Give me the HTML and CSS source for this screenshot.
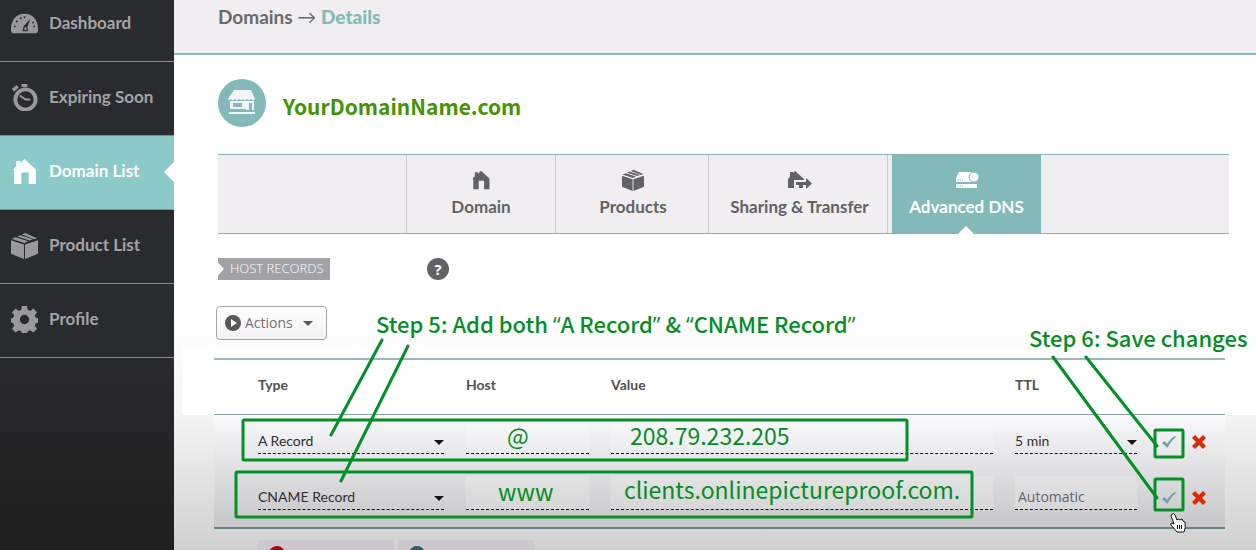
FILE: index.html
```html
<!DOCTYPE html>
<html lang="en">
<head>
<meta charset="utf-8">
<title>Domain Details</title>
<link rel="stylesheet" href="styles.css">
</head>
<body>
<svg class="defs" aria-hidden="true">
  <symbol id="house" viewBox="0 0 24 26"><path d="M1 11 4 8V3h4v2l4-4 11 10v14h-7V14H9v11H2V12z"/></symbol>
  <symbol id="box" viewBox="0 0 26 26"><path d="M0 8l12.500 4v14L0 21zM13.500 12L26 8v13l-12.500 5zM.5 6.500L4.500 5l12 4-3.500 1.500zM6 4.300l3-1.200 12 4-3 1.200zM10.500 2.500L13.500 1 25 6l-2.500 1z"/></symbol>
  <symbol id="gear" viewBox="0 0 26 26"><path fill-rule="evenodd" d="M10.500 0h5l.6 3.700 2.400 1 3-2.200 3.600 3.600-2.200 3 1 2.300 3.100.6v4l-3.100.6-1 2.400 2.200 3-3.600 3.500-3-2.200-2.400 1-.6 3.700h-5l-.6-3.700-2.400-1-3 2.200L.9 22l2.200-3-1-2.400-2.100-.6v-4l2.100-.6 1-2.300-2.200-3 3.600-3.600 3 2.200 2.400-1zM13 8.500a4.500 4.500 0 100 9 4.500 4.500 0 000-9z"/></symbol>
  <symbol id="tick" viewBox="0 0 14 12"><path d="M0 7l3-2 2 3q4-6 8-8l1 1Q8 6 5.500 12z"/></symbol>
  <symbol id="cross" viewBox="0 0 14 14"><path d="M0 3l3-3 4 4 4-4 3 3-4 4 4 4-3 3-4-4-4 4-3-3 4-4z"/></symbol>
</svg>

<div class="app">
  <aside class="sidebar">
    <nav aria-label="Account">
      <a class="side-link" href="#"><svg class="side-icon" viewBox="0 0 28 28"><path d="M0 20C0 10 6 4 14 4s14 6 14 16q0 4-2 4H2q-2 0-2-4z"/><g class="dial"><circle cx="4" cy="17" r="1"/><circle cx="6" cy="12" r="1"/><circle cx="10" cy="8.500" r="1"/><circle cx="14" cy="7.500" r="1"/><circle cx="23" cy="13" r="1"/><circle cx="24" cy="17" r="1"/><path d="M20 9l-3 9 .5 4H12l1-5z"/></g><path d="M14 18h2v3h-2z"/></svg><span>Dashboard</span></a>
      <a class="side-link" href="#"><svg class="side-icon" viewBox="0 0 28 28"><circle cx="15" cy="16" r="10.500" class="ring"/><path d="M11 0h6v3h-6zM1 5l5-4 2 3-5 4z"/><path d="M9 12l6 4h5" class="hand"/></svg><span>Expiring Soon</span></a>
      <a class="side-link active" href="#" aria-current="page"><svg class="side-icon"><use href="#house"/></svg><span>Domain List</span></a>
      <a class="side-link" href="#"><svg class="side-icon"><use href="#box"/></svg><span>Product List</span></a>
      <a class="side-link" href="#"><svg class="side-icon"><use href="#gear"/></svg><span>Profile</span></a>
    </nav>
  </aside>

  <main class="main">
    <header class="crumbs"><a href="#">Domains</a> <span>→</span> <strong>Details</strong></header>

    <div class="content">
      <div class="domain">
        <svg class="badge" viewBox="0 0 48 48"><circle cx="24" cy="24" r="24"/><path class="white" d="M16 11h17l4 9-2 1.500-2-1.500-2 1.500-2-1.500-2 1.500-2-1.500-2 1.500-2-1.500-2 1.500-2-1.500-2 1.500-2-1.500-2 1.500-1-1.500zM11 33h26v2H11z"/><path class="white" fill-rule="evenodd" d="M12 22h24v9h-2v-7h-3v7h-3v-1H12zM15 24v4h9v-4z"/></svg>
        <h1>YourDomainName.com</h1>
      </div>

      <nav class="tabs" aria-label="Domain sections">
        <a class="tab" href="#"><svg class="tab-icon"><use href="#house"/></svg>Domain</a>
        <a class="tab products" href="#"><svg class="tab-icon big"><use href="#box"/></svg>Products</a>
        <a class="tab sharing" href="#"><svg class="tab-icon wide" viewBox="0 0 24 18"><path d="M0 8l2-2V1h3v1l2-2 9 8v1H6v8H0z"/><path d="M8 11h10V7l6 5.500-6 5.500v-4h-3v3h-4v-3H8z"/></svg>Sharing &amp; Transfer</a>
        <a class="tab current" href="#" aria-current="page"><svg class="tab-icon wide" viewBox="0 0 24 18"><path d="M4 1h12l4 6H1zM1 7h20v4H1zM1 13h21v4H1z"/><circle cx="19" cy="6" r="5" class="cog"/><path class="leds" d="M3 9h6M3 15h6"/></svg>Advanced DNS</a>
      </nav>

      <div class="section-head">
        <h2>HOST RECORDS</h2>
        <button class="help" type="button" aria-label="Help">?</button>
      </div>

      <button class="actions" type="button"><svg class="play" viewBox="0 0 16 16"><circle cx="8" cy="8" r="8"/><path d="M6 4l6 4-6 4z"/></svg>Actions<i class="caret"></i></button>
    </div>

    <div class="records">
      <table>
        <colgroup><col class="c-type"><col class="c-host"><col><col class="c-ttl"><col class="c-act"></colgroup>
        <thead><tr><th>Type</th><th>Host</th><th>Value</th><th>TTL</th><th></th></tr></thead>
        <tbody>
          <tr>
            <td><div class="pick"><select aria-label="Type"><option>A Record</option></select><i class="caret"></i></div></td>
            <td><input class="note host-at" aria-label="Host" value="@"></td>
            <td><input class="note inset" aria-label="Value" value="208.79.232.205"></td>
            <td class="ttl"><div class="pick"><select aria-label="TTL"><option>5 min</option></select><i class="caret"></i></div></td>
            <td><div class="row-actions"><button type="button" aria-label="Save"><svg class="tick"><use href="#tick"/></svg></button><button type="button" aria-label="Cancel"><svg class="cross"><use href="#cross"/></svg></button></div></td>
          </tr>
          <tr>
            <td><div class="pick"><select aria-label="Type"><option>CNAME Record</option></select><i class="caret"></i></div></td>
            <td><input class="note host-www" aria-label="Host" value="www"></td>
            <td><input class="note raised" aria-label="Value" value="clients.onlinepictureproof.com."></td>
            <td class="ttl"><input class="auto" aria-label="TTL" value="Automatic"></td>
            <td><div class="row-actions"><button type="button" aria-label="Save"><svg class="tick"><use href="#tick"/></svg></button><button type="button" aria-label="Cancel"><svg class="cross"><use href="#cross"/></svg></button></div></td>
          </tr>
        </tbody>
      </table>
      <div class="footer">
        <button type="button" aria-label="Add record"><i class="dot red"></i></button>
        <button type="button" aria-label="Save all"><i class="dot teal"></i></button>
      </div>
    </div>
  </main>

  <svg class="marks" aria-hidden="true">
    <rect x="243" y="420" width="664" height="40" rx="1"/>
    <rect x="236" y="472" width="736" height="45" rx="1"/>
    <rect x="1155" y="430" width="28" height="27" rx="1"/>
    <rect x="1155" y="479" width="28" height="31" rx="1"/>
    <path d="M382 340 331 435M408 346 341 481M1053 357l104 141M1086 357l71 89"/>
  </svg>
  <p class="step five">Step 5: Add both <q>A Record</q> &amp; <q>CNAME Record</q></p>
  <p class="step six">Step 6: Save changes</p>
  <svg class="pointer" viewBox="0 0 17 20" aria-hidden="true"><path d="M3 1q2-1 3 1l2 5 1-1 2 1 2-1 1 2 2 1q1 6-1 10H8L2 12q-1-2 1-2l2 1L2 3z"/><path d="M8.500 12v4M10.500 12v4M12.500 12v4"/></svg>
</div>
</body>
</html>
```

FILE: styles.css
```css
* { box-sizing: border-box; }
body { margin: 0; font-family: Lato, "Open Sans", sans-serif; color: #58585a; background: #fff; }
h1, h2, p { margin: 0; }
a { color: inherit; text-decoration: none; }
button, input, select { font-family: inherit; color: inherit; border: 0; padding: 0; margin: 0; background: none; border-radius: 0; }
.defs { position: absolute; width: 0; height: 0; }
.app { position: relative; display: flex; height: 100vh; overflow: hidden; }

.sidebar { flex: 0 0 174px; background: linear-gradient(#2a2b2f, #2a2b2f 340px, #201f1f); }
.sidebar nav { margin-top: -12px; }
.side-link { position: relative; display: flex; align-items: center; gap: 11px; height: 74px; padding-left: 11px; border-bottom: 1px solid #87898c; color: #a3a3a6; font-size: 17px; font-weight: 700; line-height: 20px; }
.side-link span { padding-bottom: 3px; }
.side-icon { width: 27px; height: 27px; margin-bottom: 2px; fill: #99999c; }
.dial { fill: #2a2b2f; }
.ring { fill: none; stroke: #99999c; stroke-width: 4; }
.hand { fill: none; stroke: #99999c; stroke-width: 2; }
.active { background: #8ccaca; color: #fff; }
.active .side-icon { fill: #fff; }
.active::after { content: ""; position: absolute; right: 0; top: 26px; border: 10px solid transparent; border-right-color: #fff; border-left: 0; }

.main { flex: 1; min-width: 0; background: linear-gradient(#fff, #fff 310px, #f4f4f4 415px, #d0d0d0 550px); }
.crumbs { height: 55px; padding: 5px 44px; background: #f0eef1; border-bottom: 2px solid #87b4b5; font-size: 19px; line-height: 24px; font-weight: 700; color: #69696b; }
.crumbs span { font-weight: 400; }
.crumbs strong { color: #82b9b9; }
.content { padding: 24px 27px 0 44px; }
.domain { display: flex; align-items: center; gap: 17px; height: 48px; }
.badge { width: 48px; height: 48px; fill: #83b9b9; }
.white { fill: #f3f6f6; }
h1 { padding-top: 6px; font: 700 21px/28px "Noto Sans CJK SC", "Open Sans", sans-serif; color: #449301; }

.tabs { display: flex; height: 80px; margin-top: 27px; padding-left: 188px; background: #f0eef1; border: solid #84b3b2; border-width: 1px 0; }
.tab { position: relative; display: flex; flex-direction: column; align-items: center; gap: 6px; width: 149px; padding-top: 15px; border-left: 1px solid #cbcbce; color: #626264; font-size: 17px; line-height: 22px; font-weight: 700; }
.tab-icon { width: 20px; height: 20px; fill: #626264; }
.big { width: 22px; height: 22px; margin: -1px 0; }
.wide { width: 24px; }
.products { width: 153px; padding-left: 2px; }
.sharing { width: 180px; padding-left: 3px; border-right: 1px solid #cbcbce; }
.current { margin-left: 4px; border: 0; background: #83b9b9; color: #fff; }
.current .tab-icon { fill: #fff; }
.cog { stroke: #83b9b9; }
.leds { stroke: #83b9b9; stroke-dasharray: 1 1; }
.current::after { content: ""; position: absolute; bottom: -1px; left: 66px; border: 8px solid transparent; border-bottom-color: #fff; border-top: 0; }

.section-head { display: flex; align-items: center; margin-top: 24px; }
h2 { width: 112px; height: 22px; padding-left: 12px; background: #a1a1a7; clip-path: polygon(0 0, 100% 0, 100% 100%, 0 100%, 0 80%, 6px 50%, 0 20%); color: #fff; font: 300 13px/21px "Open Sans", sans-serif; white-space: nowrap; }
.help { width: 22px; height: 22px; margin-left: 97px; border-radius: 50%; background: #626264; color: #fff; font: 700 15px/22px "Open Sans", sans-serif; }
.actions { display: flex; align-items: center; width: 111px; height: 34px; margin: 26px 0 0 -2px; padding-left: 8px; border: 1px solid #a6a6a8; border-radius: 4px; background: linear-gradient(#fff, #f2f1f3); font: 400 14px/20px "Open Sans", sans-serif; color: #717173; }
.play { width: 16px; height: 16px; margin-right: 4px; fill: #58585a; }
.play path { fill: #fff; }
.caret { display: block; border: 5px solid transparent; border-top-color: #151515; border-bottom: 0; }
.actions .caret { margin-left: 10px; border-top-color: #58585a; }

.records { margin: 5px 0 0 8px; padding: 13px 31px 0 32px; background: linear-gradient(#fff 0, #fff 70px, transparent 70px); }
table { width: 100%; table-layout: fixed; border-collapse: separate; border-spacing: 0; border-top: 2px solid #9ab9bc; border-bottom: 2px solid #678587; }
.c-type { width: 252px; }
.c-host { width: 145px; }
.c-ttl { width: 139px; }
.c-act { width: 71px; }
th { height: 55px; padding: 0 0 6px; border-bottom: 1px solid #8ca3a6; text-align: left; font-size: 14px; font-weight: 700; color: #505052; }
th:first-child, td:first-child { padding-left: 44px; }
tbody { background: linear-gradient(#faf9fc, #dfdee0 50%, #c7c6c8); }
td { height: 56px; padding: 5px 22px 17px 0; vertical-align: top; }
td.ttl { padding-right: 17px; }
td:last-child { padding: 5px 0 0; }
.pick, .note, .auto { display: block; width: 100%; height: 34px; border-bottom: 1px dashed #111; }
.pick { position: relative; padding-top: 9px; color: #303032; }
.pick select { width: 100%; height: 23px; appearance: none; font-size: 14px; }
.pick .caret { position: absolute; right: 0; top: 20px; pointer-events: none; }
.note { padding: 0 0 3px 13px; background: #ffffff30; background-clip: padding-box; color: #058d25; font: 400 23px/30px "Noto Sans CJK SC", "Open Sans", sans-serif; }
.host-at { padding-left: 41px; }
.host-www { padding-left: 32px; }
.raised { padding-bottom: 8px; }
.inset { padding-left: 19px; }
.auto { padding: 8px 0 0 3px; background: #ffffff30; font: 400 14px/20px "Open Sans", sans-serif; color: #66646e; }
.row-actions { display: flex; padding-top: 7px; }
.row-actions button { display: grid; place-items: center; width: 30px; height: 30px; }
.tick { width: 14px; height: 12px; fill: #6fa3a5; }
.cross { width: 14px; height: 14px; fill: #d92c05; }
.footer { display: flex; gap: 4px; margin-top: 11px; padding-left: 44px; }
.footer button { display: flex; align-items: flex-start; width: 136px; height: 36px; padding: 6px 11px; border-radius: 4px; background: #cbc9cb; }
.dot { display: block; width: 16px; height: 16px; border-radius: 50%; }
.red { background: linear-gradient(#fff, #fff) center / 2px 8px no-repeat #b00505; }
.teal { background: #365b5b; }

.marks { position: absolute; inset: 0; width: 100%; height: 100%; pointer-events: none; fill: none; stroke: #058f29; stroke-width: 3; stroke-linecap: round; }
.step { position: absolute; white-space: nowrap; color: #058d25; font: 500 22px/30px "Noto Sans CJK SC", "Open Sans", sans-serif; }
.step q { quotes: "“" "”"; }
.step q::before, .step q::after { font-family: "Open Sans", sans-serif; }
.five { left: 376px; top: 308px; }
.six { left: 1029px; top: 322px; }
.pointer { position: absolute; left: 1169px; top: 513px; width: 17px; height: 20px; fill: #fff; stroke: #111; }
```
